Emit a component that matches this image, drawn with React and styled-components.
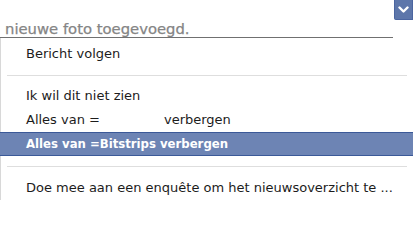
import React from "react";
import styled, { createGlobalStyle } from "styled-components";

const Global = createGlobalStyle`
  html, body { margin: 0; padding: 0; background: #ffffff; }
  body { overflow: hidden; }
`;

const Page = styled.div`
  width: 413px;
  height: 200px;
  overflow: hidden;
  font-family: "DejaVu Sans", "Liberation Sans", sans-serif;
`;

const Header = styled.div`
  display: flex;
  align-items: flex-start;
`;

const Title = styled.div`
  flex: 1;
  height: 38px;
  box-sizing: border-box;
  border-bottom: 1px solid #707070;
  padding: 19px 0 0 5px;
  font-size: 14.8px;
  line-height: 20px;
  color: #858585;
  white-space: nowrap;
  -webkit-text-stroke: 0.25px #858585;
`;

const ChevronButton = styled.div`
  width: 19px;
  height: 20px;
  margin-left: 1px;
  box-sizing: border-box;
  background: #5d76aa;
  border: 1px solid #4b65a0;
  border-top: none;
  border-radius: 0 0 0 2px;
  display: flex;
  align-items: center;
  justify-content: center;
`;

const Menu = styled.div`
  border-left: 1px solid #d8d8d8;
  padding-top: 4px;
  display: flex;
  flex-direction: column;
`;

const Item = styled.div`
  height: 24px;
  box-sizing: border-box;
  border-top: 1px solid ${(p) => (p.$active ? "#3b5998" : "transparent")};
  border-bottom: 1px solid ${(p) => (p.$active ? "#3b5998" : "transparent")};
  margin-left: ${(p) => (p.$active ? -1 : 0)}px;
  padding-left: ${(p) => (p.$active ? 26 : 25)}px;
  background: ${(p) => (p.$active ? "#6d84b4" : "transparent")};
  color: ${(p) => (p.$active ? "#ffffff" : "#1c1c1c")};
  font-family: ${(p) =>
    p.$active
      ? `"DejaVu Sans Condensed", "DejaVu Sans", sans-serif`
      : `"DejaVu Sans", sans-serif`};
  font-weight: ${(p) => (p.$active ? "bold" : "normal")};
  font-size: 13px;
  line-height: 22px;
  white-space: nowrap;
`;

const Separator = styled.div`
  height: 1px;
  background: #dedede;
  margin: ${(p) => p.$margin};
`;

const Hidden = styled.span`
  display: inline-block;
  width: 64px;
`;

export default function App() {
  return (
    <Page>
      <Global />
      <Header>
        <Title>nieuwe foto toegevoegd.</Title>
        <ChevronButton>
          <svg width="11" height="8" viewBox="0 0 11 8">
            <polyline
              points="1.5,1.5 5.5,5.5 9.5,1.5"
              fill="none"
              stroke="#ffffff"
              strokeWidth="2.4"
              strokeLinecap="round"
              strokeLinejoin="round"
            />
          </svg>
        </ChevronButton>
      </Header>
      <Menu>
        <Item>Bericht volgen</Item>
        <Separator $margin="9px 6px 8px 6px" />
        <Item>Ik wil dit niet zien</Item>
        <Item>
          Alles van =<Hidden />verbergen
        </Item>
        <Item $active>Alles van =Bitstrips verbergen</Item>
        <Separator $margin="10px 6px 9px 6px" />
        <Item>Doe mee aan een enquête om het nieuwsoverzicht te ...</Item>
      </Menu>
    </Page>
  );
}
